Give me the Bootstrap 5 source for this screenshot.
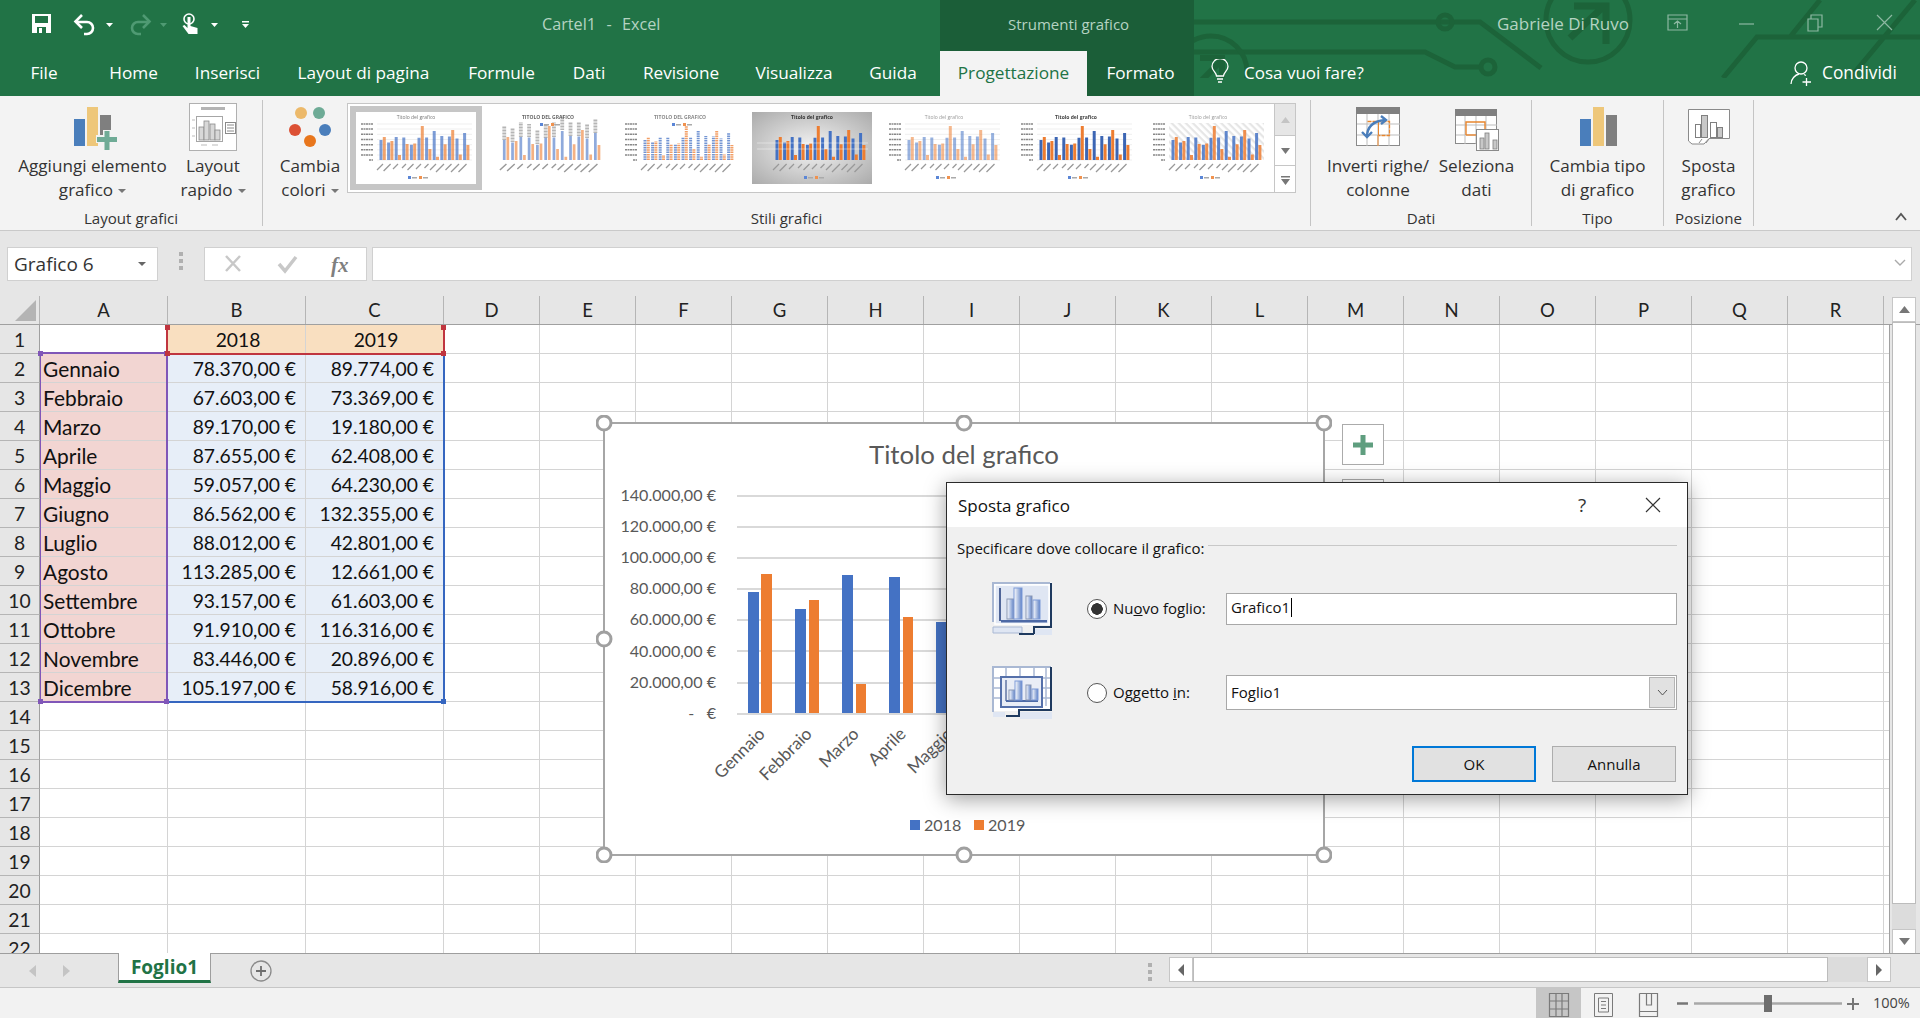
<!DOCTYPE html>
<html lang="it">
<head>
<meta charset="utf-8">
<title>Cartel1 - Excel</title>
<link href="https://cdn.jsdelivr.net/npm/bootstrap@5.3.0/dist/css/bootstrap.min.css" rel="stylesheet">
<style>
html,body{height:1018px;overflow:hidden}
body{position:relative;width:1920px;background:#e6e6e6;font-family:"Open Sans","Liberation Sans",sans-serif;color:#262626;font-size:16px}
.titlebar{height:51px;color:#b5d3c2;font-size:16.2px;position:relative}
.head{background:#217346;position:relative;height:96px;overflow:hidden}
.circuit{position:absolute;left:1194px;top:0;width:726px;height:78px}
.tooltint{position:absolute;left:940px;top:0;width:254px;height:96px;background:#1b5e38}
.qat{position:absolute;left:25px;top:5px;width:230px;height:40px}
.ttext{position:absolute;top:12px;line-height:24px;white-space:nowrap}
.ttext.tool{left:1008px;font-size:15px}
.ttext.user{left:1497px;font-size:17px}
.ttext.doc{left:542px;word-spacing:1px}
.winbtns{position:absolute;left:1660px;top:10px;width:240px;height:26px}
.tabs{position:absolute;left:0;top:51px;height:45px;color:#fff;font-size:17.2px;flex-wrap:nowrap}
.tabs .t{line-height:43px;height:45px;text-align:center;white-space:nowrap}
.tabs .t:nth-child(1){width:88px}.tabs .t:nth-child(2){width:91px}.tabs .t:nth-child(3){width:97px}.tabs .t:nth-child(4){width:175px}.tabs .t:nth-child(5){width:101px}.tabs .t:nth-child(6){width:74px}.tabs .t:nth-child(7){width:110px}.tabs .t:nth-child(8){width:116px}.tabs .t:nth-child(9){width:82px;margin-right:6px}
.tabs .t:nth-child(10){width:147px;background:#f3f3f3;color:#217346}.tabs .t:nth-child(11){width:107px}
.bulb{position:absolute;left:1210px;top:59px}
.tell{position:absolute;left:1244px;top:51px;line-height:43px;color:#fff;font-size:17px}
.share{position:absolute;left:1790px;top:51px;line-height:43px;color:#fff;font-size:17.3px}
.ribbon{height:135px;background:#f3f3f3;border-bottom:1px solid #c9c9c9;position:relative;font-size:17.1px;line-height:24px;color:#333}
.grp{height:126px;margin-top:4px;border-right:1px solid #c4c4c4;position:relative}
.g1{width:263px}.g2{width:1048px}.g3{width:221px}.g4{width:132px}.g5{width:90px}
.glabel{position:absolute;left:0;right:0;bottom:-2px;text-align:center;font-size:15.1px;line-height:20px;color:#333}
.big{padding:0;display:flex;flex-direction:column;align-items:center;white-space:nowrap;text-align:center;border:0}
.big svg{display:block;height:54px;margin-bottom:0}
.w161{width:161px;margin-left:12px}.w161 svg{margin-left:-5px}.w80{width:80px}.w78{width:78px;margin-left:8px}
.w100{width:100px;margin-left:17px}.w97{width:97px}.wfull{width:100%}
.caret-s{display:inline-block;width:0;height:0;border:4px solid transparent;border-top-color:#777;border-bottom:0;vertical-align:middle;margin-left:5px}
.gallery{margin-left:-2px;margin-top:3px;height:90px;width:927px;background:#fff;border:1px solid #c6c6c6;border-width:1px 0 1px 1px;padding:2px 0 0 2px}
.thumb{width:132px;height:84px;padding:6px 6px;flex:none}
.thumb.sel{background:#c6c6c6}
.thumb svg{display:block;width:120px;height:72px;background:#fff;filter:blur(.6px)}
.gscroll{width:22px;height:90px;margin-top:3px;background:#fff;border:1px solid #c6c6c6}
.gscroll div{height:30px;border-bottom:1px solid #c6c6c6;display:flex;align-items:center;justify-content:center}
.gscroll div:first-child{background:#e6e6e6;height:32px}
.gscroll div:last-child{border:0;height:28px}
.collapse-c{position:absolute;left:1895px;top:116px}
.fbar{height:65px;padding-top:16px;position:relative}
.namebox{width:151px;height:34px;margin-left:7px;background:#fff;border:1px solid #d0d0d0;font-size:19px;line-height:32px;padding-left:6px;color:#333;position:relative}
.namebox i{position:absolute;right:11px;top:14px;border:4px solid transparent;border-top-color:#666;border-bottom:0}
.dots{width:46px;height:28px;display:flex;flex-direction:column;align-items:center;justify-content:center;gap:3px}
.dots b{display:block;width:4px;height:4px;background:#b0b0b0}
.fx{width:163px;height:34px;background:#fff;border:1px solid #d0d0d0}
.finput{flex:1;height:34px;margin:0 8px 0 5px;background:#fff;border:1px solid #d0d0d0;position:relative}
.finput svg{position:absolute;right:4px;top:10px}
.colhead{height:29px;background:#e6e6e6;border-bottom:1px solid #a0a0a0;font-family:Lato,"Liberation Sans",sans-serif;font-size:18.5px;color:#222;line-height:27px}
.colhead>div{border-right:1px solid #b5b5b5;text-align:center;flex:none;height:28px;padding-top:1px}
.c0{width:40px;position:relative}.cA{width:128px}.cB{width:138px}.cC{width:138px}.cX{width:96px}.cE{width:6px}
.colhead .cE{border-right:0}
.corner{position:absolute;left:15px;top:4px;width:0;height:0;border-style:solid;border-width:0 0 21px 21px;border-color:transparent transparent #b4b4b4 transparent}
.vscroll{width:24px;flex:none;display:flex;flex-direction:column;background:#dcdcdc;position:absolute;left:1892px;top:297px;height:657px}
.vbtn{height:25px;background:#fff;border:1px solid #c6c6c6;display:flex;align-items:center;justify-content:center}
.vthumb{height:582px;background:#fff;border:1px solid #bcbcbc}
.sheet{height:628px;position:relative;overflow:hidden}
.cells{border-collapse:separate;border-spacing:0;table-layout:fixed;width:444px;flex:none;font-family:Lato,"Liberation Sans",sans-serif;font-size:19.3px;color:#111;margin:0}
.cells td,.cells th{height:29px;padding:2px 3px 0;border-right:1px solid #d4d4d4;border-bottom:1px solid #d4d4d4;line-height:24px;font-weight:400;white-space:nowrap;overflow:hidden;background:#fff}
.cells th{width:40px;background:#e6e6e6;border-right:1px solid #a0a0a0;border-bottom:1px solid #b5b5b5;text-align:center;color:#222;padding:2px 0 0}
.cells .a{background:#f2d5d2;padding-left:3px;font-size:20.9px}
.cells .h{background:#f9dfc0;text-align:center;padding-left:6px;padding-right:3px}
.cells .v{background:#e7eef8;text-align:right;padding-right:9px}
.gridr{width:1446px;flex:none;background-image:linear-gradient(to right,transparent 95px,#d4d4d4 95px),linear-gradient(to bottom,transparent 28px,#d4d4d4 28px);background-size:96px 29px;background-color:#fff;border-right:1px solid #a0a0a0}
.rng{position:absolute;border:2px solid currentColor}
.rng i{position:absolute;width:5px;height:5px;background:currentColor}
.tl{left:-3px;top:-3px}.tr{right:-3px;top:-3px}.bl{left:-3px;bottom:-3px}.br{right:-3px;bottom:-3px}
.r1{left:166px;top:1px;width:279px;height:29px;color:#c0353f;border-top-color:transparent}
.r2{left:40px;top:27px;width:128px;height:351px;color:#8056b8;border-left-width:1px}
.r3{left:167px;top:29px;width:278px;height:349px;color:#3566c0;border-left:0;border-top:0}
.tabbar{height:35px;border-top:1px solid #9e9e9e;border-bottom:1px solid #c6c6c6;position:relative}
.navs{width:118px;padding-left:29px;gap:27px;height:100%}
.sheettab{width:93px;height:30px;margin-top:-1px;background:#fff;border:solid #9e9e9e;border-width:0 1px;border-bottom:3px solid #217346;color:#217346;font-weight:700;font-size:19px;text-align:center;line-height:29px}
.addsheet{margin-left:39px;margin-top:6px}
.hs{margin-left:auto;margin-right:29px;margin-top:3px;height:25px;width:722px;background:#dcdcdc}
.hsbtn{width:24px;background:#fff;border:1px solid #c6c6c6;display:flex;align-items:center;justify-content:center;flex:none}
.hthumb{width:635px;background:#fff;border:1px solid #bcbcbc;flex:none}
.hdots{position:absolute;left:1148px;top:9px;gap:3px}
.hdots b{display:block;width:4px;height:4px;background:#b0b0b0}
.statusbar{height:30px;background:#f2f2f2;position:relative;font-size:14.5px;color:#444}
.stat{position:absolute;left:1536px;top:0;width:384px;height:30px}
.pct{position:absolute;left:1873px;top:0;line-height:30px;white-space:nowrap}
.chart{position:absolute;left:596px;top:415px;width:736px;height:448px}
.chart text{font-family:Lato,"Liberation Sans",sans-serif;fill:#595959}
.elbtn{position:absolute;left:1342px;width:42px;height:41px;background:#fff;border:1px solid #ababab;display:flex;align-items:center;justify-content:center}
.dlg{position:absolute;left:946px;top:482px;width:742px;height:313px;border:1px solid #2a2a2a;border-radius:0;background:#f0f0f0;box-shadow:0 4px 20px rgba(0,0,0,.38);font-size:15px;color:#111}
.dlg .card-header{height:44px;background:#fff;border:0;border-radius:0;padding:0 0 0 11px;font-size:17px;line-height:46px;position:relative}
.dlg .q{position:absolute;left:631px;top:-1px;font-size:19px;color:#333}
.dlg .x{position:absolute;left:698px;top:14px}
.dlg .card-body{padding:0;position:relative}
.lead-row{padding:10px 10px 0 10px;line-height:22px;gap:4px}
.lead-row hr{flex:1;margin:0;border-top:1px solid #c8c8c8;opacity:1;margin-top:8px}
.optrow{height:53px;padding-left:45px}
.optrow>svg{flex:none;width:60px;height:53px}
.optrow .form-check-input{width:20px;height:20px;margin:0 0 0 35px;flex:none;background-color:#fff;border:1px solid #555;float:none}
.optrow .form-check-input:checked{background-color:#fff;border-color:#555;background-image:radial-gradient(circle,#333 0 5.5px,transparent 6px)}
.optrow label{width:119px;padding-left:6px;white-space:nowrap;flex:none}
.optrow .form-control,.optrow .form-select{width:451px;border-radius:0;border:1px solid #a8a8a8;padding:0 4px;font-size:15px;color:#111;background-image:none;box-shadow:none;line-height:27px;height:32px;min-height:0}
.optrow .form-select{height:35px}
.cursor{display:inline-block;width:1px;height:19px;background:#000;vertical-align:-4px;margin-left:1px}
.selbox{position:relative}
.selbtn{position:absolute;right:2px;top:2px;bottom:2px;width:26px;background:#e1e1e1;border:1px solid #b4b4b4;display:flex;align-items:center;justify-content:center;pointer-events:none}
.actions{position:absolute;left:465px;top:219px;gap:16px}
.actions .btn{width:124px;height:36px;border-radius:0;background:#e1e1e1;border:1px solid #adadad;font-size:15px;color:#111;padding:0;line-height:33px}
.actions .btn.def{border:2px solid #0078d7}
</style>
</head>
<body>
<svg width="0" height="0" class="position-absolute">
<defs>
<path id="bb" d="M25 48V27.9M32.6 48V30.6M40.2 48V25.1M47.8 48V25.5M55.4 48V32.8M63 48V25.7M70.6 48V25.4M78.2 48V18.9M85.8 48V24M93.4 48V24.4M101 48V26.5M108.6 48V21" fill="none"/>
<path id="bo" d="M28.3 48V24.9M35.9 48V29.1M43.5 48V43.1M51.1 48V32M58.7 48V31.5M66.3 48V14M73.9 48V37M81.5 48V44.7M89.1 48V32.2M96.7 48V18.1M104.3 48V42.6M111.9 48V32.9" fill="none"/>
<path id="yl" d="M5 12H17M5 17H17M5 22.300H17M5 27.500H17M5 32.700H17M5 37.800H17M5 43H17M13 48H17" stroke="#888" stroke-width="1.4" fill="none" stroke-dasharray="2 .5"/>
<path id="gl" d="M21 12H116M21 17H116M21 22.300H116M21 27.500H116M21 32.700H116M21 37.800H116M21 43H116M21 48H116" stroke="#e4e4e4" stroke-width=".6" fill="none"/>
<path id="xl" d="M27 52l-6 6M34.600 52l-7 7M42 52l-5 5M50 52l-4 4M57.500 52l-6 6M65 52l-5 5M72.500 52l-4 4M80 52l-6 6M88 52l-8 8M95.500 52l-6 6M103 52l-8 8M110.500 52l-8 8" stroke="#999" stroke-width="1.300" fill="none"/>
<g id="lg"><rect x="52" y="64" width="3" height="3" fill="#5b86d6"/><rect x="56" y="65" width="5" height="1.500" fill="#aaa"/><rect x="63" y="64" width="3" height="3" fill="#f0924f"/><rect x="67" y="65" width="5" height="1.500" fill="#aaa"/></g>
<linearGradient id="barg" x1="0" x2="1" y1="0" y2="0"><stop offset="0" stop-color="#fff"/><stop offset="1" stop-color="#5f82c6"/></linearGradient>
<radialGradient id="grayg" r=".75"><stop offset="0" stop-color="#f4f4f4"/><stop offset="1" stop-color="#a6a6a6"/></radialGradient>
<pattern id="hatch" width="5" height="5" patternUnits="userSpaceOnUse" patternTransform="rotate(45)"><rect width="5" height="5" fill="#fff"/><rect width="5" height="2.200" fill="#e6e6e6"/></pattern>
</defs>
</svg>

<header class="head">
  <div class="tooltint"></div>
  <svg class="circuit" viewBox="1194 0 726 78" fill="none" stroke="#1c6339" stroke-width="5">
    <path d="M1187 22H1480L1541 68M1194 52H1425L1455 67H1482"/>
    <circle cx="1181" cy="22" r="7"/><circle cx="1445" cy="22" r="7"/><circle cx="1488" cy="67" r="7"/>
    <circle cx="1211" cy="72" r="36"/><path d="M1198 84L1220 62M1200 58H1222V80" stroke-width="6"/>
    <circle cx="1588" cy="20" r="42"/><path d="M1570 38L1604 6M1574 6H1606V44" stroke-width="7"/>
    <path d="M1723 78L1757 37H1920M1850 78L1915 0M1790 37L1820 0"/>
  </svg>
  <div class="titlebar">
    <svg class="qat" viewBox="25 5 230 40">
      <path fill="#fff" fill-rule="evenodd" d="M32 14H51V33H32ZM35 16V23H48V16ZM37 27V33H46V27Z"/><rect x="39" y="28" width="3" height="5" fill="#fff"/>
      <g fill="none" stroke="#fff" stroke-width="2.600"><path d="M76 22H87a6 6 0 0 1 6 6 6 6 0 0 1-6 6h-3"/><path d="M82 15L75.500 21.500 82 28"/></g>
      <path fill="#fff" d="M106 23h7l-3.500 4z"/>
      <g fill="none" stroke="#4f9a73" stroke-width="2.600"><path d="M149 22H138a6 6 0 0 0-6 6 6 6 0 0 0 6 6h3"/><path d="M143 15L149.500 21.500 143 28"/></g>
      <path fill="#4f9a73" d="M160 23h7l-3.500 4z"/>
      <circle cx="189" cy="19" r="5" fill="none" stroke="#fff" stroke-width="1.600"/>
      <path fill="#fff" d="M187.500 17h3v9l7 2v6h-9l-6-8 2-1 3 3z"/>
      <path fill="#fff" d="M211 23h7l-3.500 4z"/>
      <path fill="#fff" d="M242 21h7v1.500h-7zM242 24h7l-3.500 4z"/>
    </svg>
    <span class="ttext doc">Cartel1&nbsp; -&nbsp; Excel</span>
    <span class="ttext tool">Strumenti grafico</span>
    <span class="ttext user">Gabriele Di Ruvo</span>
    <svg class="winbtns" viewBox="1660 10 240 26" fill="none" stroke="#8db8a2" stroke-width="1.200">
      <path d="M1668 15H1687V30H1668ZM1668 19H1687M1677.500 28V21M1674 24L1677.500 21 1681 24"/>
      <path d="M1739 24H1754"/>
      <path d="M1808 19H1818V31H1808ZM1811 19V15H1822V27H1818"/>
      <path d="M1877 15L1892 30M1892 15L1877 30"/>
    </svg>
  </div>
  <nav class="nav tabs">
    <div class="t">File</div><div class="t">Home</div><div class="t">Inserisci</div><div class="t">Layout di pagina</div><div class="t">Formule</div><div class="t">Dati</div><div class="t">Revisione</div><div class="t">Visualizza</div><div class="t">Guida</div><div class="t">Progettazione</div><div class="t">Formato</div>
  </nav>
  <svg class="bulb" width="20" height="26" viewBox="0 0 20 26" fill="none" stroke="#fff" stroke-width="1.300"><path d="M6.500 17C6 13 2 11.500 2 7.500a8 8 0 0 1 16 0C18 11.500 14 13 13.500 17ZM7 20H13M8 23H12"/></svg>
  <div class="tell">Cosa vuoi fare?</div>
  <div class="share d-flex align-items-center gap-2">
    <svg width="24" height="26" viewBox="0 0 24 26" fill="none" stroke="#fff" stroke-width="1.300"><circle cx="11" cy="8" r="6"/><path d="M1 24c0-5 4-9 8-10M14 14.500l2 1M16.500 18V26M12.500 22H21"/></svg>
    <span>Condividi</span>
  </div>
</header>

<section class="ribbon d-flex">
  <div class="grp g1 d-flex">
    <div class="big w161">
      <svg width="60" height="54" viewBox="60 100 60 54"><rect x="74" y="119" width="11" height="27" fill="#4a7ebb"/><rect x="87" y="107" width="11" height="39" fill="#eec77a"/><rect x="100" y="115" width="11" height="23" fill="#7f7f7f"/><path fill="#f3f3f3" d="M103 130h8v5h6v8h-6v7h-8v-7h-7v-8h7z"/><path fill="#6fab96" d="M104.500 131h5v6h7.500v5h-7.500v8h-5v-8h-7.500v-5h7.500z"/></svg>
      <span>Aggiungi elemento</span><span>grafico<i class="caret-s"></i></span>
    </div>
    <div class="big w80">
      <svg width="50" height="54" viewBox="188 100 50 54"><rect x="189.500" y="103.500" width="47" height="47" fill="#fff" stroke="#b0b0b0"/><rect x="201" y="107" width="24" height="3" fill="#b4b4b4"/><rect x="196.500" y="116.500" width="26" height="25" fill="#fff" stroke="#a6a6a6"/><g fill="#d8d8d8" stroke="#8a8a8a" stroke-width=".8"><rect x="199" y="127" width="5" height="13"/><rect x="204" y="121" width="5" height="19"/><rect x="210" y="124" width="5" height="16"/><rect x="215" y="130" width="5" height="10"/></g><rect x="225.500" y="122.500" width="10" height="11" fill="#fff" stroke="#8a8a8a"/><path d="M227 125h7M227 128h7M227 131h7" stroke="#8a8a8a"/><path d="M192 120h3M192 128h3M192 136h3M201 145h6M212 145h6" stroke="#bbb"/></svg>
      <span>Layout</span><span>rapido<i class="caret-s"></i></span>
    </div>
    <div class="glabel">Layout grafici</div>
  </div>
  <div class="grp g2 d-flex align-items-start">
    <div class="big w78">
      <svg width="44" height="54" viewBox="288 100 44 54"><circle cx="301" cy="113" r="6" fill="#ecb96a"/><circle cx="319" cy="113" r="6" fill="#6eab96"/><circle cx="295" cy="130" r="6" fill="#dc5034"/><circle cx="325" cy="130" r="6" fill="#4a7ebb"/><circle cx="310" cy="141" r="6" fill="#e8761c"/></svg>
      <span>Cambia</span><span>colori<i class="caret-s"></i></span>
    </div>
    <div class="gallery d-flex">
      <div class="thumb sel"><svg viewBox="0 0 120 72"><use href="#gl"/><use href="#yl"/><use href="#xl"/><use href="#lg"/><use href="#bb" stroke="#4472c4" stroke-width="3" opacity=".7"/><use href="#bo" stroke="#ed7d31" stroke-width="3" opacity=".7"/><text x="60" y="7" font-size="5" text-anchor="middle" fill="#777">Titolo del grafico</text></svg></div>
      <div class="thumb"><svg viewBox="0 0 120 72"><g transform="translate(-11 0) scale(1.09 1)"><use href="#xl"/><path d="M25 28V14M32.600 30V16M40.200 25V10M47.800 25V12M55.400 32V18M63 26V12M70.600 25V10M78.200 18V3M85.800 24V10M93.400 24V10M101 26V12M108.600 21V7" stroke="#b5b5b5" stroke-width="3.500" stroke-dasharray="1 .5"/><use href="#bb" stroke="#4472c4" stroke-width="2.500" opacity=".6"/><use href="#bo" stroke="#ed7d31" stroke-width="2.500" opacity=".6"/></g><text x="60" y="7" font-size="5" font-weight="700" text-anchor="middle" fill="#666">TITOLO DEL GRAFICO</text><use href="#lg" transform="translate(0 -53)"/></svg></div>
      <div class="thumb"><svg viewBox="0 0 120 72"><use href="#yl"/><use href="#xl"/><use href="#bb" stroke="#4472c4" stroke-width="3" stroke-dasharray="1.500 .8" opacity=".75"/><use href="#bo" stroke="#ed7d31" stroke-width="3" stroke-dasharray="1.500 .8" opacity=".75"/><text x="60" y="7" font-size="5" font-weight="700" text-anchor="middle" fill="#888">TITOLO DEL GRAFICO</text><use href="#lg" transform="translate(0 -53)"/></svg></div>
      <div class="thumb"><svg viewBox="0 0 120 72"><rect width="120" height="72" fill="url(#grayg)"/><use href="#xl"/><use href="#bb" stroke="#4472c4" stroke-width="3"/><use href="#bo" stroke="#ed7d31" stroke-width="3"/><path d="M5 31H116M5 37H116" stroke="#fff" stroke-opacity=".6" stroke-width=".7"/><use href="#lg"/><text x="60" y="7" font-size="5" font-weight="700" text-anchor="middle" fill="#333">Titolo del grafico</text></svg></div>
      <div class="thumb"><svg viewBox="0 0 120 72"><use href="#gl"/><use href="#yl"/><use href="#xl"/><use href="#lg"/><use href="#bb" stroke="#4472c4" stroke-width="3" opacity=".55"/><use href="#bo" stroke="#ed7d31" stroke-width="3" opacity=".55"/><text x="60" y="7" font-size="5" text-anchor="middle" fill="#999">Titolo del grafico</text></svg></div>
      <div class="thumb"><svg viewBox="0 0 120 72"><use href="#gl"/><use href="#yl"/><use href="#xl"/><use href="#lg"/><use href="#bb" stroke="#3c66b4" stroke-width="3"/><use href="#bo" stroke="#ed7d31" stroke-width="3"/><text x="60" y="7" font-size="5" font-weight="700" text-anchor="middle" fill="#444">Titolo del grafico</text></svg></div>
      <div class="thumb"><svg viewBox="0 0 120 72"><rect x="21" y="11" width="95" height="37" fill="url(#hatch)"/><use href="#yl"/><use href="#xl"/><use href="#lg"/><use href="#bb" stroke="#4472c4" stroke-width="3" opacity=".85"/><use href="#bo" stroke="#ed7d31" stroke-width="3" opacity=".85"/><text x="60" y="7" font-size="5" text-anchor="middle" fill="#999">Titolo del grafico</text></svg></div>
    </div>
    <div class="gscroll">
      <div><svg width="9" height="6"><path d="M0 6L4.500 0 9 6Z" fill="#c4c4c4"/></svg></div>
      <div><svg width="9" height="6"><path d="M0 0H9L4.500 6Z" fill="#777"/></svg></div>
      <div><svg width="9" height="9"><path d="M0 0H9V1.500H0ZM0 3H9L4.500 9Z" fill="#777"/></svg></div>
    </div>
    <div class="glabel">Stili grafici</div>
  </div>
  <div class="grp g3 d-flex">
    <div class="big w100">
      <svg width="46" height="54" viewBox="1355 100 46 54"><rect x="1356.500" y="107.500" width="43" height="38" fill="#fff" stroke="#8a8a8a"/><rect x="1356" y="107" width="44" height="7" fill="#808080"/><path d="M1367 114V146M1378 114V146M1389 114V146M1357 124H1400M1357 135H1400" stroke="#bdbdbd"/><path d="M1367.500 121.500H1389.500V135.500H1378.500" fill="none" stroke="#e8862e" stroke-width="1.300" stroke-dasharray="4 1"/><path d="M1378 146V135M1378.500 121V135" stroke="#e8862e"/><g fill="none" stroke="#4a7ebb" stroke-width="2.400"><path d="M1367 137C1367 126 1374 121 1385 120"/><path d="M1381 116l5 4-5 4M1362 132l5 5 5-5"/></g></svg>
      <span>Inverti righe/</span><span>colonne</span>
    </div>
    <div class="big w97">
      <svg width="46" height="54" viewBox="1455 100 46 54"><rect x="1456.500" y="109.500" width="41" height="34" fill="#fff" stroke="#8a8a8a"/><rect x="1456" y="109" width="42" height="7" fill="#808080"/><path d="M1466 116V144M1477 116V144M1487 116V144M1457 125H1498M1457 135H1498" stroke="#bdbdbd"/><path d="M1467 135V122H1486V130" fill="none" stroke="#e8862e" stroke-width="1.400"/><path d="M1467 135H1477" stroke="#e8862e" stroke-width="1.400"/><rect x="1477.500" y="129.500" width="22" height="21" fill="#fff" stroke="#8a8a8a"/><g fill="#c8c8c8" stroke="#7f7f7f" stroke-width=".8"><rect x="1481" y="138" width="4" height="11"/><rect x="1486" y="133" width="4" height="16"/><rect x="1494" y="140" width="4" height="9"/></g></svg>
      <span>Seleziona</span><span>dati</span>
    </div>
    <div class="glabel">Dati</div>
  </div>
  <div class="grp g4">
    <div class="big wfull">
      <svg width="40" height="54" viewBox="1577 100 40 54"><rect x="1579" y="119" width="11" height="27" fill="#4a7ebb"/><rect x="1592" y="107" width="11" height="39" fill="#eec77a"/><rect x="1605" y="115" width="11" height="31" fill="#7f7f7f"/></svg>
      <span>Cambia tipo</span><span>di grafico</span>
    </div>
    <div class="glabel">Tipo</div>
  </div>
  <div class="grp g5">
    <div class="big wfull">
      <svg width="44" height="54" viewBox="1687 100 44 54"><path d="M1688.500 109.500H1729.500V138.500H1709L1704 144H1692L1688.500 141Z" fill="#fff" stroke="#8a8a8a"/><path d="M1702 139l-3 4M1709 139l-3 4" stroke="#8a8a8a"/><g fill="#c8c8c8" stroke="#7f7f7f"><rect x="1695.500" y="124.500" width="5" height="13" fill="#fff"/><rect x="1701.500" y="115.500" width="6" height="22"/><rect x="1710.500" y="122.500" width="6" height="15" fill="#fff"/><rect x="1717.500" y="127.500" width="5" height="10"/></g></svg>
      <span>Sposta</span><span>grafico</span>
    </div>
    <div class="glabel">Posizione</div>
  </div>
  <svg class="collapse-c" width="12" height="9"><path d="M1 8L6 2 11 8" fill="none" stroke="#555" stroke-width="1.800"/></svg>
</section>

<section class="fbar d-flex">
  <div class="namebox">Grafico 6<i></i></div>
  <div class="dots"><b></b><b></b><b></b></div>
  <div class="fx d-flex align-items-center">
    <svg width="161" height="32" viewBox="0 0 161 32"><path d="M21 8L35 23M35 8L21 23" stroke="#c8c8c8" stroke-width="2.500"/><path d="M74 16L80 23 91 9" fill="none" stroke="#c8c8c8" stroke-width="3.500"/><text x="126" y="24" font-family="Liberation Serif,serif" font-style="italic" font-weight="700" font-size="21" fill="#7f7f7f">fx</text></svg>
  </div>
  <div class="finput"><svg width="14" height="10"><path d="M2 2L7 7 12 2" fill="none" stroke="#aaa" stroke-width="1.400"/></svg></div>
</section>

<div class="colhead d-flex">
  <div class="c0"><span class="corner"></span></div><div class="cA">A</div><div class="cB">B</div><div class="cC">C</div><div class="cX">D</div><div class="cX">E</div><div class="cX">F</div><div class="cX">G</div><div class="cX">H</div><div class="cX">I</div><div class="cX">J</div><div class="cX">K</div><div class="cX">L</div><div class="cX">M</div><div class="cX">N</div><div class="cX">O</div><div class="cX">P</div><div class="cX">Q</div><div class="cX">R</div><div class="cE"></div>
</div>

<main class="sheet d-flex">
  <table class="cells">
    <colgroup><col style="width:40px"><col style="width:128px"><col style="width:138px"><col style="width:138px"></colgroup>
    <tbody>
    <tr><th>1</th><td></td><td class="h">2018</td><td class="h">2019</td></tr>
    <tr><th>2</th><td class="a">Gennaio</td><td class="v">78.370,00 €</td><td class="v">89.774,00 €</td></tr>
    <tr><th>3</th><td class="a">Febbraio</td><td class="v">67.603,00 €</td><td class="v">73.369,00 €</td></tr>
    <tr><th>4</th><td class="a">Marzo</td><td class="v">89.170,00 €</td><td class="v">19.180,00 €</td></tr>
    <tr><th>5</th><td class="a">Aprile</td><td class="v">87.655,00 €</td><td class="v">62.408,00 €</td></tr>
    <tr><th>6</th><td class="a">Maggio</td><td class="v">59.057,00 €</td><td class="v">64.230,00 €</td></tr>
    <tr><th>7</th><td class="a">Giugno</td><td class="v">86.562,00 €</td><td class="v">132.355,00 €</td></tr>
    <tr><th>8</th><td class="a">Luglio</td><td class="v">88.012,00 €</td><td class="v">42.801,00 €</td></tr>
    <tr><th>9</th><td class="a">Agosto</td><td class="v">113.285,00 €</td><td class="v">12.661,00 €</td></tr>
    <tr><th>10</th><td class="a">Settembre</td><td class="v">93.157,00 €</td><td class="v">61.603,00 €</td></tr>
    <tr><th>11</th><td class="a">Ottobre</td><td class="v">91.910,00 €</td><td class="v">116.316,00 €</td></tr>
    <tr><th>12</th><td class="a">Novembre</td><td class="v">83.446,00 €</td><td class="v">20.896,00 €</td></tr>
    <tr><th>13</th><td class="a">Dicembre</td><td class="v">105.197,00 €</td><td class="v">58.916,00 €</td></tr>
    <tr><th>14</th><td></td><td></td><td></td></tr>
    <tr><th>15</th><td></td><td></td><td></td></tr>
    <tr><th>16</th><td></td><td></td><td></td></tr>
    <tr><th>17</th><td></td><td></td><td></td></tr>
    <tr><th>18</th><td></td><td></td><td></td></tr>
    <tr><th>19</th><td></td><td></td><td></td></tr>
    <tr><th>20</th><td></td><td></td><td></td></tr>
    <tr><th>21</th><td></td><td></td><td></td></tr>
    <tr><th>22</th><td></td><td></td><td></td></tr>
    </tbody>
  </table>
  <div class="gridr"></div>
  <div class="rng r3"><i class="br"></i></div>
  <div class="rng r2"><i class="tl"></i><i class="tr"></i><i class="bl"></i><i class="br"></i></div>
  <div class="rng r1"><i class="tl"></i><i class="tr"></i><i class="bl"></i><i class="br"></i></div>
</main>

<div class="vscroll">
  <div class="vbtn"><svg width="11" height="7"><path d="M0 7L5.500 0 11 7Z" fill="#777"/></svg></div>
  <div class="vthumb"></div>
  <div class="flex-grow-1"></div>
  <div class="vbtn"><svg width="11" height="7"><path d="M0 0H11L5.500 7Z" fill="#777"/></svg></div>
</div>

<footer class="tabbar d-flex">
  <div class="navs d-flex align-items-center">
    <svg width="7" height="12"><path d="M7 0V12L0 6Z" fill="#c4c4c4"/></svg>
    <svg width="7" height="12"><path d="M0 0V12L7 6Z" fill="#c4c4c4"/></svg>
  </div>
  <div class="sheettab">Foglio1</div>
  <svg class="addsheet" width="22" height="22" viewBox="0 0 22 22"><circle cx="11" cy="11" r="10" fill="none" stroke="#8a8a8a" stroke-width="1.300"/><path d="M11 6V16M6 11H16" stroke="#6e6e6e" stroke-width="1.800"/></svg>
  <div class="hdots d-flex flex-column"><b></b><b></b><b></b></div>
  <div class="hs d-flex">
    <div class="hsbtn"><svg width="6" height="12"><path d="M6 0V12L0 6Z" fill="#666"/></svg></div>
    <div class="hthumb"></div>
    <div class="flex-grow-1"></div>
    <div class="hsbtn"><svg width="6" height="12"><path d="M0 0V12L6 6Z" fill="#666"/></svg></div>
  </div>
</footer>

<div class="statusbar">
  <svg class="stat" viewBox="1536 988 384 30" fill="none" stroke="#7a7a7a" stroke-width="1.200">
    <rect x="1536" y="988" width="45" height="30" fill="#c6c6c6" stroke="none"/>
    <path d="M1549.500 993.500H1568.500V1016.500H1549.500ZM1556 994V1016M1562 994V1016M1550 1001H1568M1550 1009H1568"/>
    <path d="M1594.500 993.500H1612.500V1016.500H1594.500ZM1598.500 998H1608.500V1012H1598.500ZM1601 1001.500H1606M1601 1005H1606M1601 1008.500H1606" stroke-width="1"/>
    <path d="M1639.500 993.500H1657.500V1011.500H1639.500M1639.500 993.500V1011.500V1016.500H1657.500V1011.500M1646.500 994V1005H1651.500V994"/>
    <path d="M1677 1003.500H1688" stroke="#777" stroke-width="2.500"/>
    <path d="M1694 1003.500H1842" stroke="#a8a8a8" stroke-width="2.500"/>
    <rect x="1764" y="995" width="8" height="17" fill="#6e6e6e" stroke="none"/>
    <path d="M1853 998V1010M1847 1004H1859" stroke="#777" stroke-width="2"/>
  </svg>
  <span class="pct">100%</span>
</div>

<svg class="chart" viewBox="596 415 736 448">
  <rect x="604" y="423" width="720" height="432" fill="#fff" stroke="#a6a6a6" stroke-width="2"/>
  <text x="964" y="464" text-anchor="middle" font-size="25.800">Titolo del grafico</text>
  <path d="M737 496H1310M737 527H1310M737 558H1310M737 589H1310M737 620H1310M737 651H1310M737 683H1310M737 714H1310" stroke="#d9d9d9" stroke-width="2"/>
  <g font-size="16.100" text-anchor="end">
    <text x="716" y="501">140.000,00 €</text><text x="716" y="532">120.000,00 €</text><text x="716" y="563">100.000,00 €</text><text x="716" y="594">80.000,00 €</text><text x="716" y="625">60.000,00 €</text><text x="716" y="657">40.000,00 €</text><text x="716" y="688">20.000,00 €</text><text x="716" y="719">-&nbsp;&nbsp; €</text>
  </g>
  <g fill="#4472c4"><rect x="748" y="592" width="11" height="121"/><rect x="795" y="609" width="11" height="104"/><rect x="842" y="575" width="11" height="138"/><rect x="889" y="577" width="11" height="136"/><rect x="936" y="622" width="11" height="91"/></g>
  <g fill="#ed7d31"><rect x="761" y="574" width="11" height="139"/><rect x="809" y="600" width="10" height="113"/><rect x="856" y="684" width="10" height="29"/><rect x="903" y="617" width="10" height="96"/></g>
  <g font-size="17.200" text-anchor="end">
    <text transform="translate(766 735) rotate(-45)">Gennaio</text>
    <text transform="translate(813 735) rotate(-45)">Febbraio</text>
    <text transform="translate(860 735) rotate(-45)">Marzo</text>
    <text transform="translate(907 735) rotate(-45)">Aprile</text>
    <text transform="translate(954 735) rotate(-45)">Maggio</text>
  </g>
  <rect x="910" y="820" width="10" height="10" fill="#4472c4"/><text x="924" y="831" font-size="16.100">2018</text>
  <rect x="974" y="820" width="10" height="10" fill="#ed7d31"/><text x="988" y="831" font-size="16.100">2019</text>
  <g fill="#fff" stroke="#a0a0a0" stroke-width="3"><circle cx="604" cy="423" r="7"/><circle cx="964" cy="423" r="7"/><circle cx="1324" cy="423" r="7"/><circle cx="604" cy="639" r="7"/><circle cx="604" cy="855" r="7"/><circle cx="964" cy="855" r="7"/><circle cx="1324" cy="855" r="7"/></g>
</svg>
<div class="elbtn" style="top:424px"><svg width="22" height="22"><path d="M8.500 1h5v7.500H21v5h-7.500V21h-5v-7.500H1v-5h7.500z" fill="#5f9e7f"/></svg></div>
<div class="elbtn" style="top:479px"></div>

<div class="card dlg">
  <div class="card-header">Sposta grafico<span class="q">?</span>
    <svg class="x" width="16" height="16"><path d="M1 1L15 15M15 1L1 15" stroke="#333" stroke-width="1.200"/></svg>
  </div>
  <div class="card-body">
    <div class="lead-row d-flex"><span>Specificare dove collocare il grafico:</span><hr></div>
    <div class="optrow d-flex align-items-center" style="margin-top:23px">
      <svg viewBox="0 0 60 53">
        <rect x="0" y="0" width="60" height="40" fill="#f7f9fd"/><path d="M1 40V1H58" fill="none" stroke="#a9b8d3" stroke-width="2"/><rect x="3" y="3" width="54" height="39" fill="#dfe6f3" stroke="#fff" stroke-width="1.500"/>
        <path d="M59 1V45H42V52" fill="none" stroke="#1f3a5f" stroke-width="2"/><path d="M1 45H30V51H1Z" fill="#dfe6f3" stroke="#a9b8d3"/><path d="M27 52H42" stroke="#1f3a5f" stroke-width="2"/><path d="M43 47H60V53H43Z" fill="#dfe6f3"/>
        <path d="M8 6V39" stroke="#1f3a7a" stroke-width="1.500"/><rect x="9" y="38" width="46" height="2.500" fill="#4d69a5"/>
        <rect x="15" y="17" width="7" height="20" fill="url(#barg)" stroke="#8a97b4"/><rect x="22" y="6" width="8" height="31" fill="url(#barg)" stroke="#7d9ad8"/><rect x="34" y="14" width="6" height="23" fill="url(#barg)" stroke="#8a97b4"/><rect x="41" y="18" width="7" height="19" fill="url(#barg)" stroke="#7d9ad8"/>
      </svg>
      <input class="form-check-input" type="radio" name="o" checked id="r1"><label for="r1">Nu<u>o</u>vo foglio:</label>
      <div class="form-control">Grafico1<span class="cursor"></span></div>
    </div>
    <div class="optrow d-flex align-items-center" style="margin-top:31px">
      <svg viewBox="0 0 60 53">
        <rect x="0" y="0" width="60" height="45" fill="#fff"/><path d="M1 46V1H59" fill="none" stroke="#a9b8d3" stroke-width="2"/><path d="M14 2V40M28 2V40M42 2V40M54 2V40M2 12H58M2 22H58M2 32H58" stroke="#a9b8d3" stroke-width="1.500"/>
        <rect x="9" y="11" width="41" height="30" fill="#e9edf6" stroke="#5570aa" stroke-width="2"/>
        <path d="M59 1V44H27V50H14" fill="none" stroke="#1f3a5f" stroke-width="2"/><path d="M1 46H13V51H1Z" fill="#dfe6f3"/><path d="M28 46H60V53H28Z" fill="#dfe6f3"/>
        <path d="M14 14V35" stroke="#1f3a7a"/><rect x="14" y="34" width="32" height="2" fill="#4d69a5"/>
        <rect x="17" y="24" width="6" height="10" fill="url(#barg)" stroke="#8a97b4"/><rect x="23" y="15" width="7" height="19" fill="url(#barg)" stroke="#7d9ad8"/><rect x="34" y="19" width="5" height="15" fill="url(#barg)" stroke="#8a97b4"/><rect x="40" y="23" width="6" height="11" fill="url(#barg)" stroke="#7d9ad8"/>
      </svg>
      <input class="form-check-input" type="radio" name="o" id="r2"><label for="r2">Oggetto <u>i</u>n:</label>
      <div class="selbox">
        <select class="form-select"><option>Foglio1</option></select>
        <div class="selbtn"><svg width="11" height="7"><path d="M1 1L5.500 6 10 1" fill="none" stroke="#555"/></svg></div>
      </div>
    </div>
    <div class="actions d-flex">
      <button class="btn def" type="button">OK</button>
      <button class="btn" type="button">Annulla</button>
    </div>
  </div>
</div>
<script src="https://cdn.jsdelivr.net/npm/bootstrap@5.3.0/dist/js/bootstrap.bundle.min.js"></script>
</body>
</html>
